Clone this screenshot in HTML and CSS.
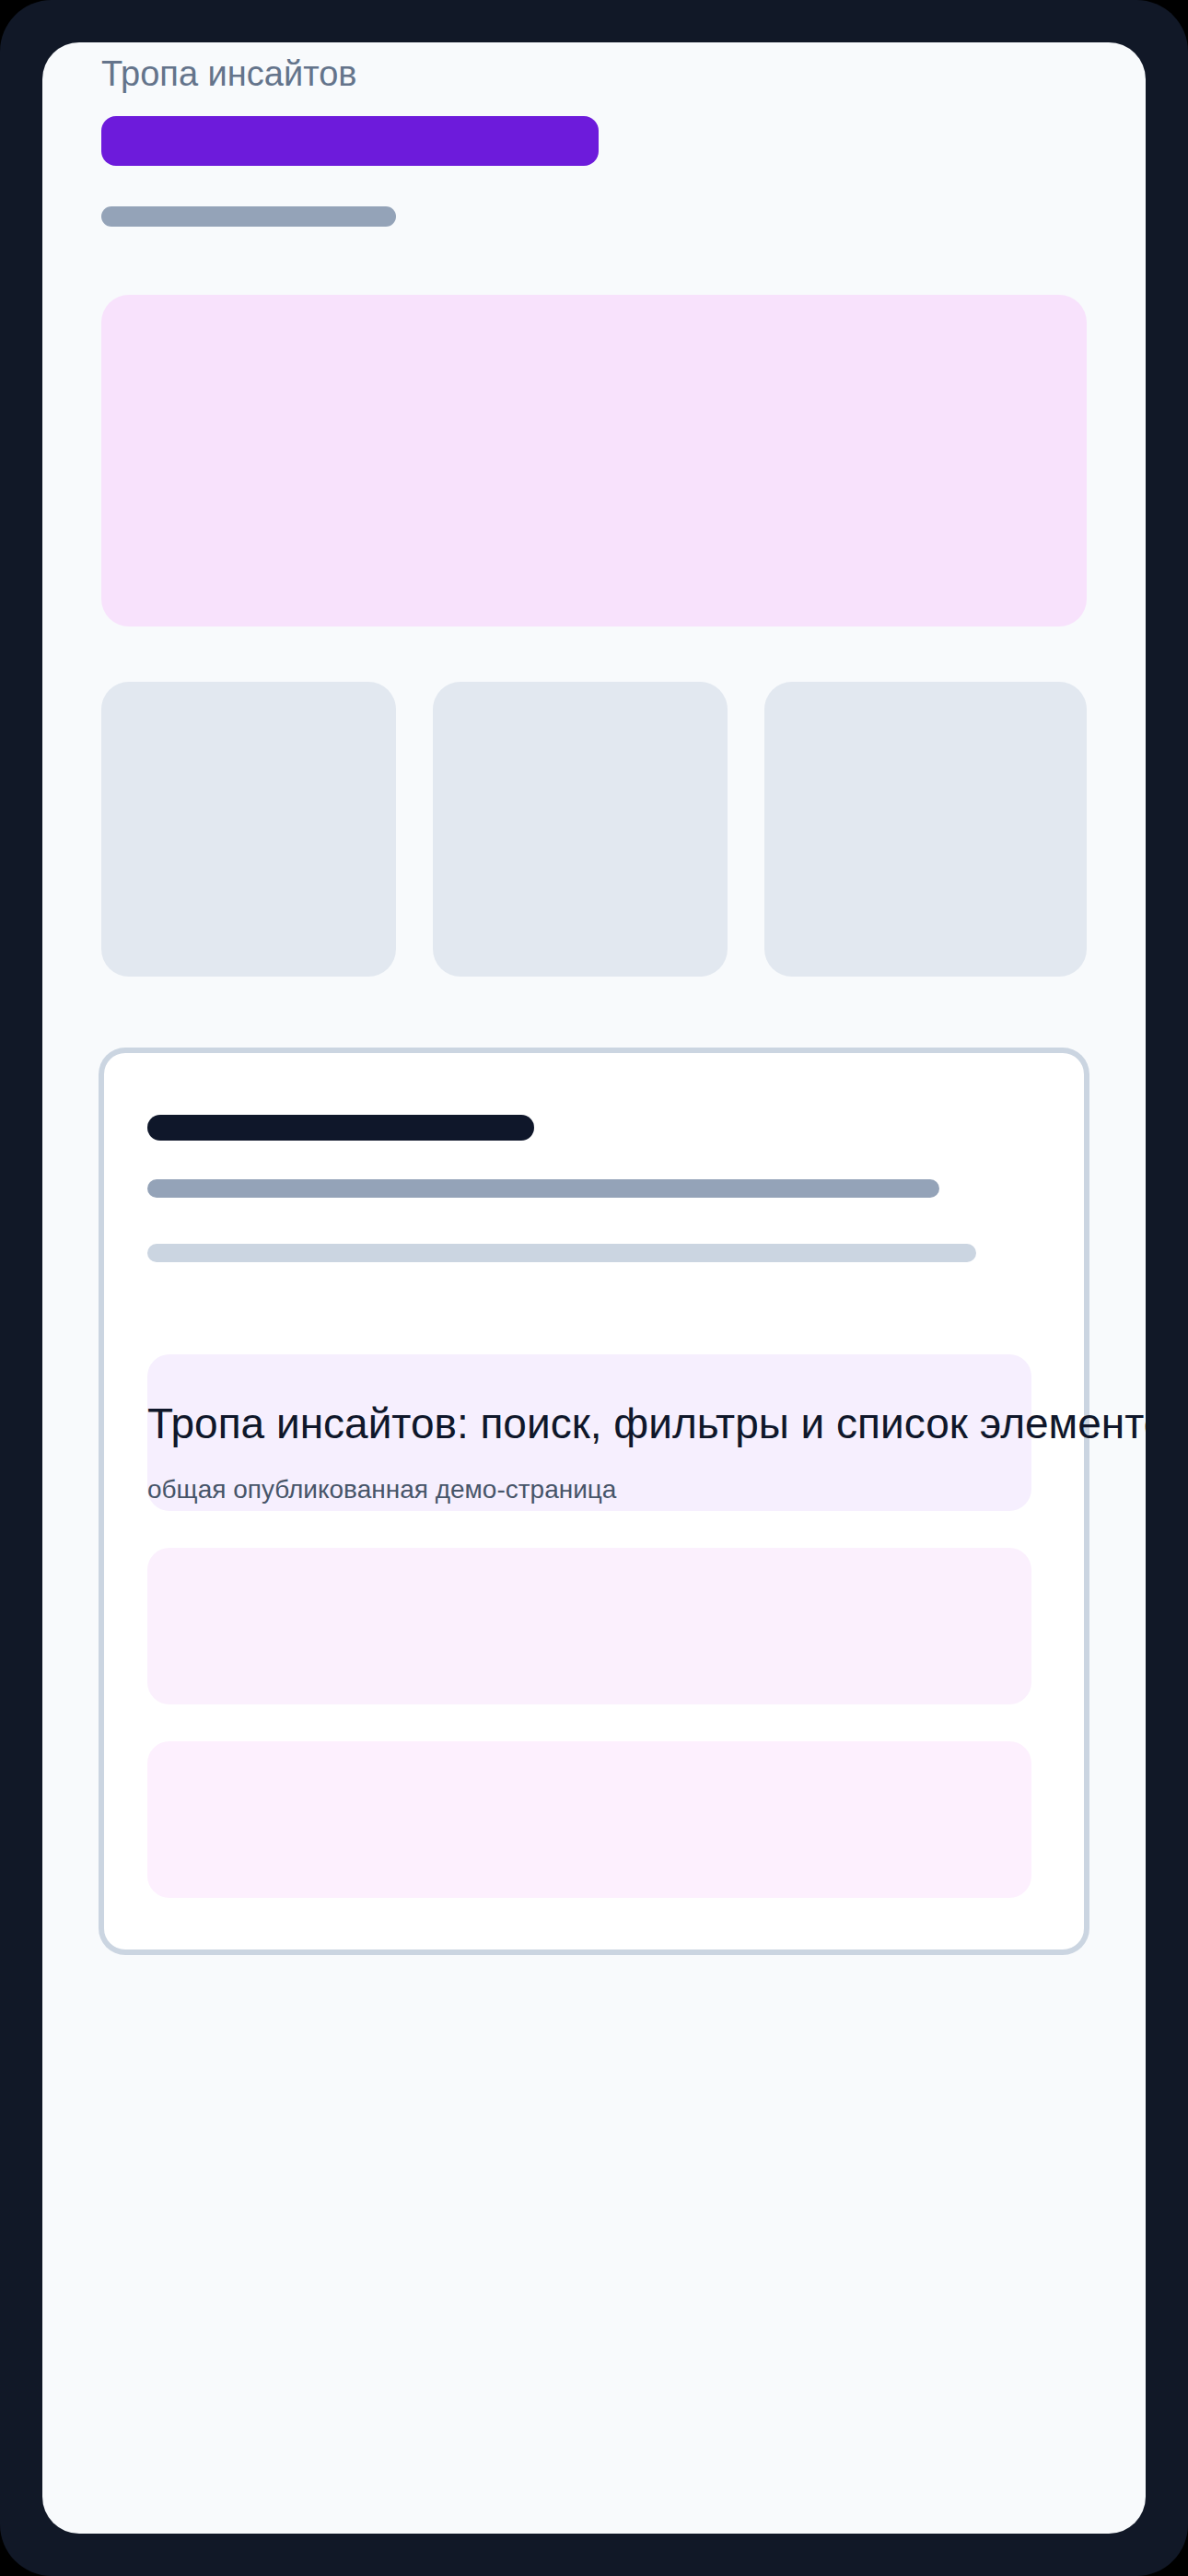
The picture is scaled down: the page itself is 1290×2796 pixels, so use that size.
FILE: index.html
```html
<!DOCTYPE html>
<html lang="ru">
<head>
<meta charset="utf-8">
<title>Тропа инсайтов</title>
<link rel="stylesheet" href="styles.css">
</head>
<body>
<div class="frame">
  <main class="panel">
    <div class="brand">Тропа инсайтов</div>
    <div class="bar-accent"></div>
    <div class="bar-meta"></div>
    <section class="hero"></section>
    <section class="tiles">
      <div class="tile"></div>
      <div class="tile"></div>
      <div class="tile"></div>
    </section>
    <section class="card">
      <div class="line line-title"></div>
      <div class="line line-mid"></div>
      <div class="line line-light"></div>
      <div class="items">
        <div class="item item-1">
          <h1 class="item-title">Тропа инсайтов: поиск, фильтры и список элементов</h1>
          <p class="item-sub">общая опубликованная демо-страница</p>
        </div>
        <div class="item item-2"></div>
        <div class="item item-3"></div>
      </div>
    </section>
  </main>
</div>
</body>
</html>
```
FILE: styles.css
```css
* { box-sizing: border-box; }
html, body {
  margin: 0;
  padding: 0;
  background: #000;
}
body {
  font-family: "Liberation Sans", Arial, sans-serif;
  width: 1290px;
  height: 2796px;
  overflow: hidden;
}
.frame {
  width: 1290px;
  height: 2796px;
  background: #111827;
  border-radius: 56px;
  padding: 46px;
}
.panel {
  width: 1198px;
  height: 2704px;
  background: #f8fafc;
  border-radius: 40px;
  overflow: hidden;
  padding: 14px 64px 0 64px;
  display: flex;
  flex-direction: column;
  align-items: flex-start;
}
.brand {
  font-size: 38px;
  line-height: 41px;
  color: #64748b;
}
.bar-accent {
  width: 540px;
  height: 54px;
  margin-top: 25px;
  border-radius: 16px;
  background: #6d1bdb;
}
.bar-meta {
  width: 320px;
  height: 22px;
  margin-top: 44px;
  border-radius: 11px;
  background: #94a3b8;
}
.hero {
  width: 1070px;
  height: 360px;
  margin-top: 74px;
  border-radius: 30px;
  background: #f8e2fc;
}
.tiles {
  width: 1070px;
  margin-top: 60px;
  display: grid;
  grid-template-columns: 320px 320px 1fr;
  gap: 40px;
}
.tile {
  height: 320px;
  border-radius: 30px;
  background: #e2e8f0;
}
.card {
  width: 1070px;
  margin-top: 80px;
  background: #ffffff;
  border: 3px solid #cbd5e1;
  box-shadow: 0 0 0 3px #cbd5e1;
  border-radius: 26px;
  padding: 67px 47px 56px 47px;
}
.line { border-radius: 14px; }
.line-title {
  width: 420px;
  height: 28px;
  background: #0f172a;
}
.line-mid {
  width: 860px;
  height: 20px;
  margin-top: 42px;
  background: #94a3b8;
  border-radius: 10px;
}
.line-light {
  width: 900px;
  height: 20px;
  margin-top: 50px;
  background: #cbd5e1;
  border-radius: 10px;
}
.items {
  margin-top: 100px;
  display: flex;
  flex-direction: column;
  gap: 40px;
}
.item {
  width: 960px;
  height: 170px;
  border-radius: 24px;
}
.item-1 {
  background: #f6effe;
  padding-top: 50px;
}
.item-2 { background: #fbf0fd; }
.item-3 { background: #fdf0fe; }
.item-title {
  margin: 0;
  font-size: 46px;
  font-weight: 400;
  line-height: 51px;
  color: #0f172a;
  white-space: nowrap;
}
.item-sub {
  margin: 30px 0 0 0;
  font-size: 28px;
  line-height: 31px;
  color: #475569;
  white-space: nowrap;
}
```
